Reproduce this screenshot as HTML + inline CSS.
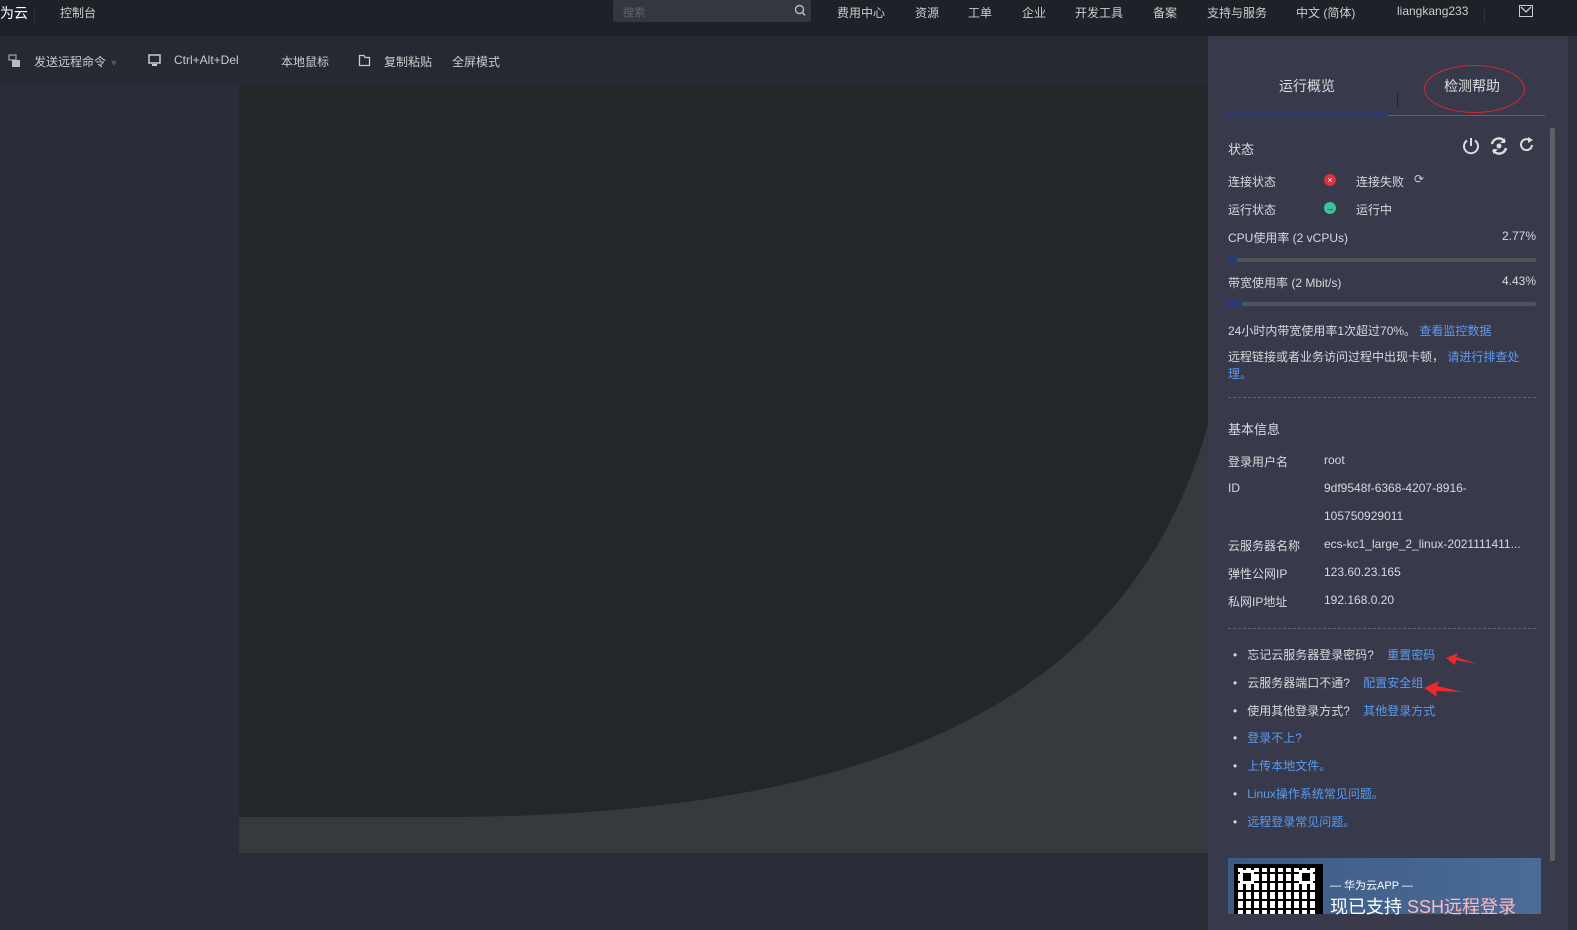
<!DOCTYPE html>
<html><head><meta charset="utf-8"><style>
*{margin:0;padding:0;box-sizing:border-box}
body{width:1577px;height:930px;overflow:hidden;background:#2a2c38;font-family:"Liberation Sans","Noto Sans CJK SC",sans-serif;font-size:12px;color:#d8d8dc;position:relative}
.a{position:absolute;white-space:nowrap}
.lk{color:#5b9bf0}
.hd{color:#dcdce0}
</style></head><body>
<div class="a" style="left:0;top:0;width:1577px;height:36px;background:#1f2128"></div>
<div class="a" style="left:0;top:3px;font-size:14px;color:#fff">为云</div>
<div class="a" style="left:34px;top:8px;width:1px;height:16px;background:#333"></div>
<div class="a" style="left:60px;top:4px;color:#ccc">控制台</div>
<div class="a" style="left:613px;top:0;width:198px;height:22px;background:#343740;border-radius:2px"></div>
<div class="a" style="left:623px;top:4px;color:#666;font-size:11px">搜索</div>
<svg class="a" style="left:794px;top:4px" width="12" height="13"><circle cx="5.5" cy="5.5" r="4" fill="none" stroke="#bbb" stroke-width="1.4"/><path d="M8.5 8.5L11 11.5" stroke="#bbb" stroke-width="1.4"/></svg>
<div class="a" style="left:837px;top:4px;color:#ccc">费用中心</div>
<div class="a" style="left:915px;top:4px;color:#ccc">资源</div>
<div class="a" style="left:968px;top:4px;color:#ccc">工单</div>
<div class="a" style="left:1022px;top:4px;color:#ccc">企业</div>
<div class="a" style="left:1075px;top:4px;color:#ccc">开发工具</div>
<div class="a" style="left:1153px;top:4px;color:#ccc">备案</div>
<div class="a" style="left:1207px;top:4px;color:#ccc">支持与服务</div>
<div class="a" style="left:1296px;top:4px;color:#ccc">中文 (简体)</div>
<div class="a" style="left:1397px;top:4px;color:#ccc">liangkang233</div>
<div class="a" style="left:1484px;top:8px;width:1px;height:14px;background:#333"></div>
<div class="a" style="left:1519px;top:5px;width:14px;height:12px;border:1.5px solid #ccc"></div>
<svg class="a" style="left:1519px;top:5px" width="14" height="12"><path d="M2 2L7 7L12 2" fill="none" stroke="#ccc" stroke-width="1.3"/></svg>

<div class="a" style="left:0;top:36px;width:1208px;height:49px;background:#262832"></div>
<svg class="a" style="left:8px;top:54px" width="14" height="14"><rect x="1" y="1" width="7" height="5" fill="none" stroke="#bbb"/><rect x="4" y="6" width="8" height="7" fill="#bbb"/></svg>
<div class="a" style="left:34px;top:53px;color:#ccc">发送远程命令 <span style="color:#555;font-size:9px">▼</span></div>
<svg class="a" style="left:148px;top:54px" width="13" height="13"><rect x="1" y="1" width="11" height="8" fill="none" stroke="#ccc" stroke-width="1.5"/><rect x="4" y="10" width="5" height="2" fill="#ccc"/></svg>
<div class="a" style="left:174px;top:53px;color:#ccc">Ctrl+Alt+Del</div>
<div class="a" style="left:281px;top:53px;color:#ccc">本地鼠标</div>
<svg class="a" style="left:358px;top:54px" width="13" height="13"><path d="M1.5 1.5H6L7 3.5H11.5V11.5H1.5Z" fill="none" stroke="#ccc" stroke-width="1.3"/></svg>
<div class="a" style="left:384px;top:53px;color:#ccc">复制粘贴</div>
<div class="a" style="left:452px;top:53px;color:#ccc">全屏模式</div>

<svg class="a" style="left:239px;top:85px" width="969" height="768"><rect width="969" height="768" fill="#363a3e"/><path d="M0 0H969V340C900 580 700 732 200 732H0Z" fill="#23272a"/></svg>

<div class="a" style="left:1208px;top:36px;width:360px;height:894px;background:#383a4c"></div>
<div class="a" style="left:1568px;top:36px;width:9px;height:894px;background:#2e303d"></div>
<div class="a" style="left:1279px;top:76px;font-size:14px;color:#ddd">运行概览</div>
<div class="a" style="left:1444px;top:76px;font-size:14px;color:#ddd">检测帮助</div>
<div class="a" style="left:1424px;top:65px;width:101px;height:48px;border:1px solid #d02a30;border-radius:50%"></div>
<div class="a" style="left:1397px;top:93px;width:1px;height:14px;background:#222"></div>
<div class="a" style="left:1228px;top:115px;width:317px;height:1px;background:#6a6150"></div>
<div class="a" style="left:1228px;top:113px;width:160px;height:3px;background:#1e3a8a"></div>
<div class="a" style="left:1550px;top:128px;width:5px;height:733px;background:#5d6065;border-radius:2px"></div>

<div class="a hd" style="left:1228px;top:139px;font-size:13px">状态</div>
<svg class="a" style="left:1461px;top:136px" width="20" height="20"><path d="M6 4.5A7 7 0 1 0 14 4.5" fill="none" stroke="#ddd" stroke-width="2"/><path d="M10 2V10" stroke="#ddd" stroke-width="2"/></svg>
<svg class="a" style="left:1489px;top:136px" width="20" height="20"><path d="M3 8A7 7 0 0 1 16 6M17 12A7 7 0 0 1 4 14" fill="none" stroke="#ddd" stroke-width="2.5"/><circle cx="10" cy="10" r="2.5" fill="#ddd"/><path d="M16 2V7H11Z M4 18V13H9Z" fill="#ddd"/></svg>
<svg class="a" style="left:1519px;top:137px" width="16" height="16"><path d="M13 8A5.5 5.5 0 1 1 10.5 3" fill="none" stroke="#ddd" stroke-width="2"/><path d="M9 0L14 3L9 6Z" fill="#ddd"/></svg>

<div class="a" style="left:1228px;top:173px">连接状态</div>
<div class="a" style="left:1324px;top:174px;width:12px;height:12px;border-radius:50%;background:#e0303f;color:#fff;font-size:9px;line-height:12px;text-align:center">×</div>
<div class="a" style="left:1356px;top:173px">连接失败</div>
<div class="a" style="left:1414px;top:172px;color:#ccc;font-size:12px">⟳</div>
<div class="a" style="left:1228px;top:201px">运行状态</div>
<div class="a" style="left:1324px;top:202px;width:12px;height:12px;border-radius:50%;background:#3ac49a;color:#1a2a2a;font-size:9px;line-height:12px;text-align:center">→</div>
<div class="a" style="left:1356px;top:201px">运行中</div>
<div class="a" style="left:1228px;top:229px">CPU使用率 (2 vCPUs)</div>
<div class="a" style="left:1502px;top:229px">2.77%</div>
<div class="a" style="left:1228px;top:258px;width:308px;height:4px;background:#50545a;border-radius:2px"></div>
<div class="a" style="left:1228px;top:258px;width:9px;height:4px;background:#1e3a8a"></div>
<div class="a" style="left:1228px;top:274px">带宽使用率 (2 Mbit/s)</div>
<div class="a" style="left:1502px;top:274px">4.43%</div>
<div class="a" style="left:1228px;top:302px;width:308px;height:4px;background:#50545a;border-radius:2px"></div>
<div class="a" style="left:1228px;top:302px;width:14px;height:4px;background:#1e3a8a"></div>
<div class="a" style="left:1228px;top:322px">24小时内带宽使用率1次超过70%。 <span class="lk">查看监控数据</span></div>
<div class="a" style="left:1228px;top:349px;line-height:17px;white-space:normal;width:300px">远程链接或者业务访问过程中出现卡顿， <span class="lk">请进行排查处理。</span></div>
<div class="a" style="left:1228px;top:397px;width:308px;border-top:1px dashed #666"></div>

<div class="a hd" style="left:1228px;top:419px;font-size:13px">基本信息</div>
<div class="a" style="left:1228px;top:453px">登录用户名</div><div class="a" style="left:1324px;top:453px">root</div>
<div class="a" style="left:1228px;top:481px">ID</div><div class="a" style="left:1324px;top:481px">9df9548f-6368-4207-8916-</div>
<div class="a" style="left:1324px;top:509px">105750929011</div>
<div class="a" style="left:1228px;top:537px">云服务器名称</div><div class="a" style="left:1324px;top:537px">ecs-kc1_large_2_linux-2021111411...</div>
<div class="a" style="left:1228px;top:565px">弹性公网IP</div><div class="a" style="left:1324px;top:565px">123.60.23.165</div>
<div class="a" style="left:1228px;top:593px">私网IP地址</div><div class="a" style="left:1324px;top:593px">192.168.0.20</div>
<div class="a" style="left:1228px;top:628px;width:308px;border-top:1px dashed #666"></div>

<div class="a" style="left:1233px;top:646px">•&nbsp;&nbsp; 忘记云服务器登录密码?&nbsp;&nbsp;&nbsp; <span class="lk">重置密码</span></div>
<div class="a" style="left:1233px;top:674px">•&nbsp;&nbsp; 云服务器端口不通?&nbsp;&nbsp;&nbsp; <span class="lk">配置安全组</span></div>
<div class="a" style="left:1233px;top:702px">•&nbsp;&nbsp; 使用其他登录方式?&nbsp;&nbsp;&nbsp; <span class="lk">其他登录方式</span></div>
<div class="a" style="left:1233px;top:729px">•&nbsp;&nbsp; <span class="lk">登录不上?</span></div>
<div class="a" style="left:1233px;top:757px">•&nbsp;&nbsp; <span class="lk">上传本地文件。</span></div>
<div class="a" style="left:1233px;top:785px">•&nbsp;&nbsp; <span class="lk">Linux操作系统常见问题。</span></div>
<div class="a" style="left:1233px;top:813px">•&nbsp;&nbsp; <span class="lk">远程登录常见问题。</span></div>
<svg class="a" style="left:1420px;top:648px" width="60" height="50"><path d="M26 10L38 5L36 9L57 16L36 12L35 17Z M4 40L19 33L17 38L43 44L16 43L17 49Z" fill="#f02a2a"/></svg>

<div class="a" style="left:1228px;top:858px;width:313px;height:56px;background:linear-gradient(90deg,#3d5a85,#4a6c96)"></div>
<div class="a" style="left:1234px;top:864px;width:89px;height:50px;background:#000"></div>
<div class="a" style="left:1238px;top:868px;width:80px;height:46px;background:repeating-linear-gradient(90deg,transparent 0 5px,#000 5px 8px),repeating-linear-gradient(0deg,#fff 0 4px,#000 4px 6px,#fff 6px 9px);"></div>
<div class="a" style="left:1240px;top:870px;width:14px;height:14px;border:3px solid #fff;background:#000"></div>
<div class="a" style="left:1299px;top:870px;width:14px;height:14px;border:3px solid #fff;background:#000"></div>
<div class="a" style="left:1330px;top:877px;color:#fff;font-size:11px">— 华为云APP —</div>
<div class="a" style="left:1330px;top:893px;color:#fff;font-size:18px">现已支持 <span style="color:#ffb8c0">SSH远程登录</span></div>
</body></html>
